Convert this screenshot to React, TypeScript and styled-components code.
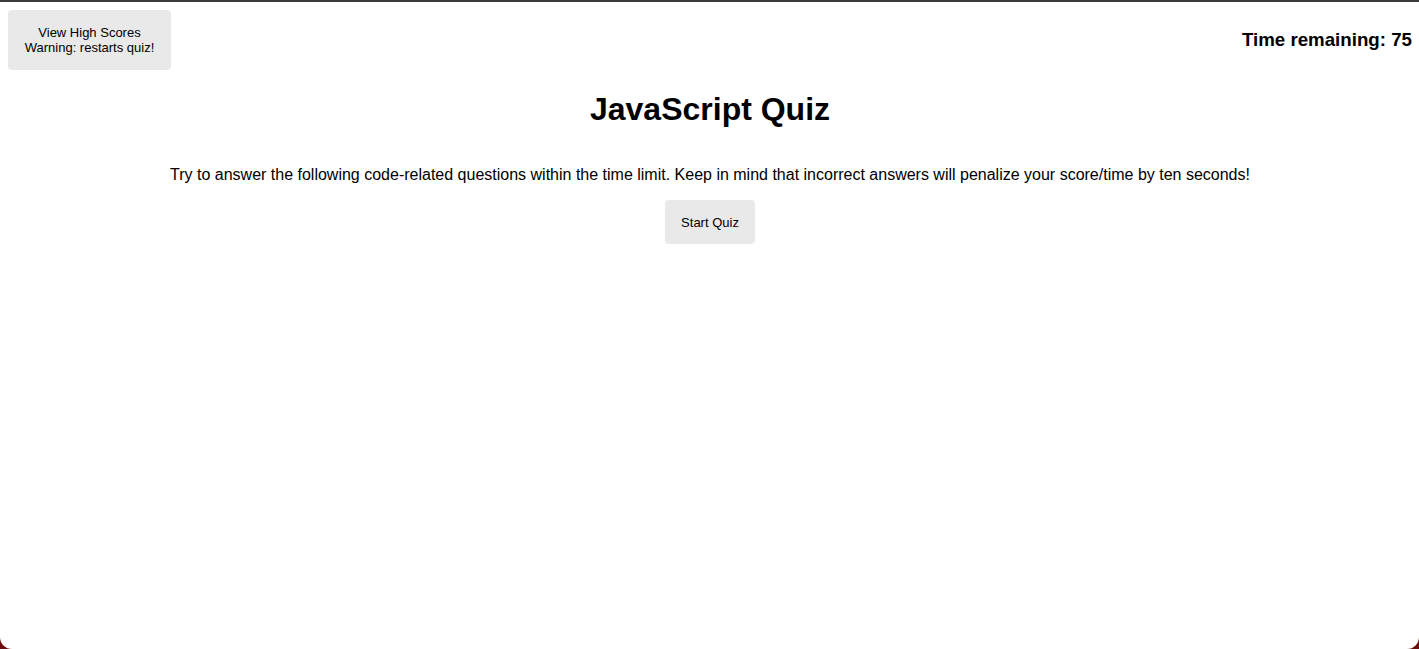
import React from "react";
import styled, { createGlobalStyle } from "styled-components";

const Global = createGlobalStyle`
  html, body { margin: 0; padding: 0; background: #6e0f0f; }
  body { font-family: "Liberation Sans", Arial, sans-serif; color: #000; }
`;

const Window = styled.div`
  width: 1419px;
  height: 649px;
  box-sizing: border-box;
  background: #fff;
  border-top: 2px solid #3a3a3a;
  border-radius: 0 0 12px 12px;
  padding: 8px 7px 0 8px;
  overflow: hidden;
`;

const Header = styled.header`
  display: flex;
  justify-content: space-between;
  align-items: center;
  height: 60px;
`;

const Button = styled.button<{ $w: number; $h: number }>`
  width: ${(p) => p.$w}px;
  height: ${(p) => p.$h}px;
  background: #e9e9e9;
  border: none;
  border-radius: 4px;
  font-family: "Liberation Sans", Arial, sans-serif;
  font-size: 13px;
  line-height: 15px;
  color: #000;
  padding: 0;
  cursor: pointer;
`;

const Timer = styled.h3`
  margin: 0;
  font-size: 18.72px;
  font-weight: bold;
`;

const Main = styled.main`
  display: flex;
  flex-direction: column;
  align-items: center;
`;

const Title = styled.h1`
  font-size: 32px;
  font-weight: bold;
  margin: 21px 0 0;
  line-height: 37px;
`;

const Intro = styled.p`
  font-size: 16px;
  line-height: 18px;
  margin: 38px 0 0;
`;

const StartWrap = styled.div`
  margin-top: 16px;
  display: flex;
`;

export default function App() {
  return (
    <>
      <Global />
      <Window>
        <Header>
          <Button $w={163} $h={60}>
            View High Scores
            <br />
            Warning: restarts quiz!
          </Button>
          <Timer>Time remaining: 75</Timer>
        </Header>
        <Main>
          <Title>JavaScript Quiz</Title>
          <Intro>
            Try to answer the following code-related questions within the time limit. Keep in mind that incorrect answers will penalize your score/time by ten seconds!
          </Intro>
          <StartWrap>
            <Button $w={90} $h={44}>Start Quiz</Button>
          </StartWrap>
        </Main>
      </Window>
    </>
  );
}
